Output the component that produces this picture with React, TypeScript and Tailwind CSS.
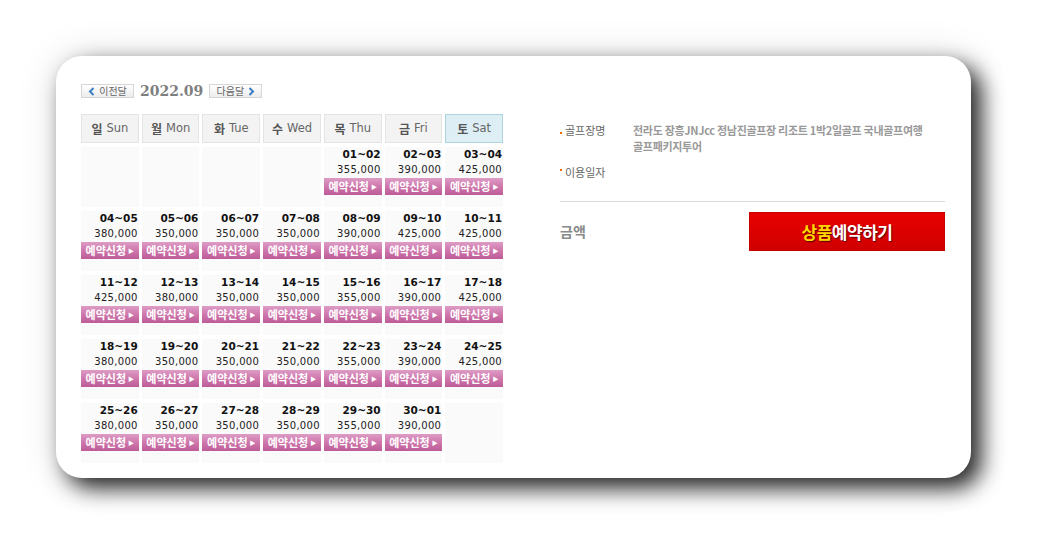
import React from 'react';

type Day = { range: string; price: string } | null;

const weeks: Day[][] = [
  [null, null, null, null, { range: '01~02', price: '355,000' }, { range: '02~03', price: '390,000' }, { range: '03~04', price: '425,000' }],
  [
    { range: '04~05', price: '380,000' },
    { range: '05~06', price: '350,000' },
    { range: '06~07', price: '350,000' },
    { range: '07~08', price: '350,000' },
    { range: '08~09', price: '390,000' },
    { range: '09~10', price: '425,000' },
    { range: '10~11', price: '425,000' },
  ],
  [
    { range: '11~12', price: '425,000' },
    { range: '12~13', price: '380,000' },
    { range: '13~14', price: '350,000' },
    { range: '14~15', price: '350,000' },
    { range: '15~16', price: '355,000' },
    { range: '16~17', price: '390,000' },
    { range: '17~18', price: '425,000' },
  ],
  [
    { range: '18~19', price: '380,000' },
    { range: '19~20', price: '350,000' },
    { range: '20~21', price: '350,000' },
    { range: '21~22', price: '350,000' },
    { range: '22~23', price: '355,000' },
    { range: '23~24', price: '390,000' },
    { range: '24~25', price: '425,000' },
  ],
  [
    { range: '25~26', price: '380,000' },
    { range: '26~27', price: '350,000' },
    { range: '27~28', price: '350,000' },
    { range: '28~29', price: '350,000' },
    { range: '29~30', price: '355,000' },
    { range: '30~01', price: '390,000' },
    null,
  ],
];

const headers = [
  ['일', 'Sun'],
  ['월', 'Mon'],
  ['화', 'Tue'],
  ['수', 'Wed'],
  ['목', 'Thu'],
  ['금', 'Fri'],
  ['토', 'Sat'],
];

const kr = "font-['Noto_Sans_CJK_KR',sans-serif]";
const num = "font-['DejaVu_Sans','Noto_Sans_CJK_KR',sans-serif]";

const Chevron = ({ dir }: { dir: 'left' | 'right' }) => (
  <svg width="7" height="9" viewBox="0 0 7 9" className="shrink-0">
    <path
      d={dir === 'left' ? 'M5.5 1 L2 4.5 L5.5 8' : 'M1.5 1 L5 4.5 L1.5 8'}
      fill="none"
      stroke="#3a7fc3"
      strokeWidth="2"
    />
  </svg>
);

const NavButton = ({ label, dir }: { label: string; dir: 'left' | 'right' }) => (
  <button
    type="button"
    className={`flex h-[14px] w-[53px] items-center justify-center gap-[4px] border border-[#d6d6d6] bg-gradient-to-b from-white to-[#ececec] text-[10px] leading-none text-[#666] ${kr}`}
  >
    {dir === 'left' && <Chevron dir="left" />}
    <span>{label}</span>
    {dir === 'right' && <Chevron dir="right" />}
  </button>
);

const DayCell = ({ day }: { day: Day }) => {
  if (!day) return <div className="h-[60px] bg-[#fafafa]" />;
  return (
    <div className="flex h-[60px] flex-col items-stretch bg-[#fafafa]">
      <div className={`pr-[1px] text-right text-[10.5px] font-bold leading-[15px] text-[#111] ${num}`}>{day.range}</div>
      <div className={`pr-[1px] text-right text-[10px] leading-[16px] tracking-[0.3px] text-[#222] ${num}`}>{day.price}</div>
      <button
        type="button"
        className={`flex h-[17px] items-center justify-center gap-[2px] bg-gradient-to-b from-[#dd9cc6] via-[#cf77ac] to-[#bd5b98] text-[11px] font-semibold leading-none text-white ${kr}`}
      >
        <span>예약신청</span>
        <span className="text-[6px]">▶</span>
      </button>
    </div>
  );
};

export default function App() {
  return (
    <div className="min-h-[549px] w-[1042px] bg-white pl-[56px] pt-[56px]">
      <div className="flex h-[422px] w-[915px] rounded-[26px] bg-white pl-[25px] pr-[26px] pt-[28px] shadow-[10px_10px_22px_rgba(0,0,0,0.85),0_0_40px_rgba(0,0,0,0.12)]">
        {/* calendar */}
        <div className="w-[422px]">
          <div className="flex items-center">
            <NavButton label="이전달" dir="left" />
            <span className="ml-[6px] font-['DejaVu_Serif',serif] text-[14px] font-bold leading-none text-[#7f7f7f]">2022.09</span>
            <span className="ml-[6px]">
              <NavButton label="다음달" dir="right" />
            </span>
          </div>

          <div className="mt-[16px] grid grid-cols-7 gap-x-[3px] gap-y-[4px]">
            {headers.map(([k, e], i) => (
              <div
                key={e}
                className={`flex h-[29px] items-center justify-center gap-[4px] border text-[12px] text-[#666] ${kr} ${
                  i === 6 ? 'border-[#acd4df] bg-[#ddeff4]' : 'border-[#e4e4e4] bg-[#f3f3f3]'
                }`}
              >
                <span className="font-bold text-[#555]">{k}</span>
                <span className="font-['DejaVu_Sans',sans-serif] text-[11.5px] text-[#666]">{e}</span>
              </div>
            ))}
            {weeks.flat().map((d, i) => (
              <DayCell key={i} day={d} />
            ))}
          </div>
        </div>

        {/* detail */}
        <div className={`ml-[57px] w-[385px] pt-[38px] ${kr}`}>
          <div className="flex">
            <div className="relative w-[73px] shrink-0 pl-[5px] text-[11px] leading-[16px] text-[#666]">
              <span className="absolute left-0 top-[10px] h-[2px] w-[2px] bg-[#f26b00]" />
              골프장명
            </div>
            <div className="whitespace-nowrap text-[11px] font-semibold leading-[16px] tracking-[-0.3px] text-[#999]">
              전라도 장흥JNJcc 정남진골프장 리조트 1박2일골프 국내골프여행
              <br />
              골프패키지투어
            </div>
          </div>
          <div className="mt-[10px] flex">
            <div className="relative w-[73px] shrink-0 pl-[5px] text-[11px] leading-[16px] text-[#666]">
              <span className="absolute left-0 top-[5px] h-[2px] w-[2px] bg-[#f26b00]" />
              이용일자
            </div>
          </div>
          <div className="mt-[21px] h-px bg-[#dadada]" />
          <div className="mt-[10px] flex items-center justify-between">
            <span className="text-[14px] font-bold text-[#8a8a8a]">금액</span>
            <button
              type="button"
              className="flex h-[39px] w-[196px] items-center justify-center border border-[#c40000] bg-gradient-to-b from-[#e80000] to-[#d00000] text-[17px] font-bold tracking-[-0.5px] [text-shadow:1px_1px_1px_rgba(60,0,0,0.8)]"
            >
              <span className="text-[#ffd800]">상품</span>
              <span className="text-white">예약하기</span>
            </button>
          </div>
        </div>
      </div>
    </div>
  );
}
